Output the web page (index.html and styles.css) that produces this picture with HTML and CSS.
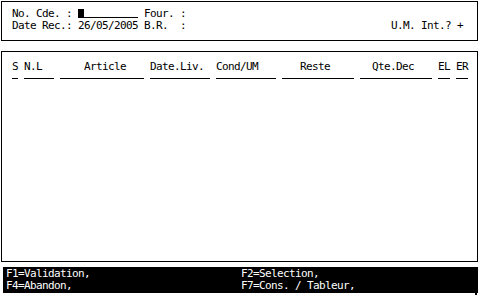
FILE: index.html
```html
<!DOCTYPE html>
<html lang="fr">
<head>
<meta charset="utf-8">
<title>Réception commande</title>
<link rel="stylesheet" href="styles.css">
</head>
<body>
<div class="screen">
  <div class="box head">
    <div class="line"><span class="txt">No. Cde. : </span><span class="cursor"></span><span class="field"></span><span class="txt"> Four. :</span></div>
    <div class="line"><span class="txt">Date Rec.: 26/05/2005 B.R.  :</span><span class="txt um">U.M. Int.? +</span></div>
  </div>
  <div class="box body">
    <div class="cols">
      <div class="col c-s"><span class="lbl">S</span><span class="rule"></span></div>
      <div class="col c-nl"><span class="lbl">N.L</span><span class="rule"></span></div>
      <div class="col c-art"><span class="lbl">Article</span><span class="rule"></span></div>
      <div class="col c-date"><span class="lbl">Date.Liv.</span><span class="rule"></span></div>
      <div class="col c-cond"><span class="lbl">Cond/UM</span><span class="rule"></span></div>
      <div class="col c-reste"><span class="lbl">Reste</span><span class="rule"></span></div>
      <div class="col c-qte"><span class="lbl">Qte.Dec</span><span class="rule"></span></div>
      <div class="col c-el"><span class="lbl">EL</span><span class="rule"></span></div>
      <div class="col c-er"><span class="lbl">ER</span><span class="rule"></span></div>
    </div>
  </div>
  <div class="keys">
    <div class="keyrow"><span class="key">F1=Validation,</span><span class="key">F2=Selection,</span></div>
    <div class="keyrow"><span class="key">F4=Abandon,</span><span class="key">F7=Cons. / Tableur,</span></div>
    <span class="mark"></span>
  </div>
</div>
</body>
</html>
```

FILE: styles.css
```css
html, body {
  margin: 0;
  padding: 0;
  background: #fff;
}
body {
  font-family: "DejaVu Sans Mono", "Liberation Mono", monospace;
  font-size: 11px;
  line-height: 12px;
  letter-spacing: -0.62px;
  color: #000;
}
.screen {
  position: relative;
  width: 479px;
  height: 307px;
  padding: 1px 0 0 1px;
  box-sizing: border-box;
}
.box {
  border: 1px solid #000;
  width: 477px;
  box-sizing: border-box;
}
.head {
  height: 40px;
  padding: 6px 0 0 10px;
}
.line {
  display: flex;
  align-items: flex-end;
  height: 12px;
  white-space: pre;
}
.txt {
  white-space: pre;
}
.um {
  margin-left: auto;
  margin-right: 14px;
}
.cursor {
  display: inline-block;
  width: 6px;
  height: 9px;
  background: #000;
  margin-bottom: 2px;
}
.field {
  display: inline-block;
  width: 54px;
  height: 1px;
  background: #000;
  margin-bottom: 2px;
}
.body {
  margin-top: 10px;
  height: 211px;
  padding: 9px 0 0 10px;
}
.cols {
  display: grid;
  grid-template-columns: 6px 30px 84px 60px 60px 72px 72px 12px 12px;
  column-gap: 6px;
}
.col {
  display: flex;
  flex-direction: column;
}
.lbl {
  height: 12px;
  white-space: pre;
}
.rule {
  margin-top: 5px;
  height: 1px;
  background: #000;
}
.c-art .lbl { padding-left: 24px; }
.c-reste .lbl { padding-left: 18px; }
.c-qte .lbl { padding-left: 12px; }
.keys {
  margin-top: 5px;
  margin-left: 2px;
  width: 475px;
  height: 26px;
  background: #000;
  color: #fff;
  padding: 1px 0 0 3px;
  box-sizing: border-box;
}
.keyrow {
  display: grid;
  grid-template-columns: 235px auto;
  height: 12px;
  white-space: pre;
}
.mark {
  position: absolute;
  left: 475px;
  top: 289px;
  width: 2px;
  height: 6px;
  background: #000;
}
```
